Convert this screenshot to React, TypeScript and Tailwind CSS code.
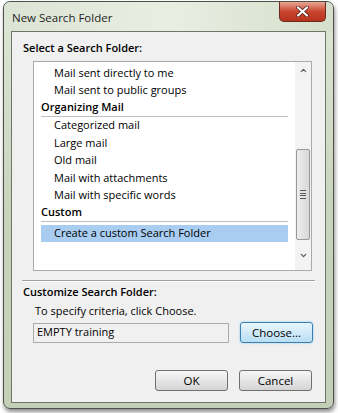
import { ChevronUp, ChevronDown } from 'lucide-react';

const font = { fontFamily: '"Open Sans", "Noto Sans", sans-serif' };

function Row({ text, bold, selected }: { text: string; bold?: boolean; selected?: boolean }) {
  if (bold) {
    return (
      <div className="h-[17.5px] flex flex-col">
        <div className="flex-1 flex items-center pl-0 font-semibold text-black">{text}</div>
        <div className="h-[2px] w-[247px] bg-[#bfbfbf]"></div>
      </div>
    );
  }
  return (
    <div
      className={`h-[17.5px] flex items-center pl-[13px] w-[247px] ${selected ? 'bg-[#a8cdf1]' : ''}`}
    >
      {text}
    </div>
  );
}

function Btn({ label, focus }: { label: string; focus?: boolean }) {
  return (
    <div
      className={`w-[73px] h-[21px] rounded-[3px] border flex items-center justify-center text-[11.5px] text-black ${
        focus
          ? 'border-[#3c7fb1] bg-gradient-to-b from-[#e8f6fd] to-[#b9def3] shadow-[0_0_2px_#6fc3ee]'
          : 'border-[#707070] bg-gradient-to-b from-[#f6f6f6] via-[#e6e6e6] to-[#d4d4d4]'
      }`}
    >
      {label}
    </div>
  );
}

export default function App() {
  return (
    <div className="w-[338px] h-[413px] bg-white overflow-hidden" style={font}>
      <div className="ml-[3px] mt-[1px] w-[331px] h-[408px] rounded-[7px] border border-[#4c5248] bg-gradient-to-b from-[#dfe6d6] via-[#c9d4bd] to-[#c3cfb6] shadow-[1px_3px_4px_rgba(0,0,0,0.45)] flex flex-col">
        {/* title bar */}
        <div className="h-[29px] flex items-start justify-between bg-gradient-to-r from-[#dce4d4] via-[#e9eee3] to-[#d5dfcb] rounded-t-[7px]">
          <div className="pl-[8px] pt-[7px] text-[11.5px] text-[#1e1e1e]">New Search Folder</div>
          <div className="mr-[7px] w-[47px] h-[20px] rounded-b-[5px] border border-[#6b2a20] border-t-0 bg-gradient-to-b from-[#e8a493] via-[#c8452e] to-[#b8321c] flex items-center justify-center">
            <svg width="13" height="11" viewBox="0 0 13 11">
              <path d="M2 1.5 L11 9.5 M11 1.5 L2 9.5" stroke="#4a1a12" strokeWidth="3.6" strokeLinecap="round" />
              <path d="M2 1.5 L11 9.5 M11 1.5 L2 9.5" stroke="#ffffff" strokeWidth="2.2" strokeLinecap="round" />
            </svg>
          </div>
        </div>

        {/* client area */}
        <div className="mx-[7px] mb-[5px] flex-1 border border-[#6f7668] bg-[#f0f0f0] flex flex-col text-[11px] text-black">
          <div className="pl-[11px] pt-[8px] font-semibold leading-[16px]">Select a Search Folder:</div>
          <div className="ml-[21px] mt-[5px] w-[279px] h-[210px] border border-[#aaaaaa] bg-white flex">
            <div className="flex-1 pl-[7px] pt-[2px] flex flex-col">
              <Row text="Mail sent directly to me" />
              <Row text="Mail sent to public groups" />
              <Row text="Organizing Mail" bold />
              <Row text="Categorized mail" />
              <Row text="Large mail" />
              <Row text="Old mail" />
              <Row text="Mail with attachments" />
              <Row text="Mail with specific words" />
              <Row text="Custom" bold />
              <div className="h-[3px]"></div>
              <Row text="Create a custom Search Folder" selected />
            </div>
            {/* scrollbar */}
            <div className="w-[16px] bg-[#f3f3f3] flex flex-col items-center">
              <div className="h-[17px] flex items-center justify-center">
                <ChevronUp size={9} strokeWidth={3} color="#555" />
              </div>
              <div className="mt-[70px] w-[14px] h-[91px] rounded-[2px] border border-[#989898] bg-gradient-to-r from-[#ececec] to-[#d8d8d8] flex items-center justify-center">
                <div className="flex flex-col gap-[1.5px]">
                  <div className="w-[6px] h-[1px] bg-[#555]"></div>
                  <div className="w-[6px] h-[1px] bg-[#555]"></div>
                  <div className="w-[6px] h-[1px] bg-[#555]"></div>
                  <div className="w-[6px] h-[1px] bg-[#555]"></div>
                </div>
              </div>
              <div className="flex-1 flex items-center justify-center">
                <ChevronDown size={9} strokeWidth={3} color="#555" />
              </div>
            </div>
          </div>

          <div className="mt-[9px] mx-[10px] h-[2px] border-t border-[#a0a0a0] border-b border-b-white"></div>

          <div className="pl-[11px] pt-[2px] font-semibold leading-[16px]">Customize Search Folder:</div>
          <div className="pl-[23px] pt-[3px] leading-[16px]">To specify criteria, click Choose.</div>
          <div className="mt-[3px] ml-[21px] flex items-center gap-[11px]">
            <div className="w-[196px] h-[20px] border border-[#ababab] bg-[#f0f0f0] flex items-center pl-[3px]">
              EMPTY training
            </div>
            <Btn label="Choose..." focus />
          </div>

          <div className="mt-auto mb-[11px] flex justify-end gap-[11px] pr-[13px]">
            <Btn label="OK" />
            <Btn label="Cancel" />
          </div>
        </div>
      </div>
    </div>
  );
}
